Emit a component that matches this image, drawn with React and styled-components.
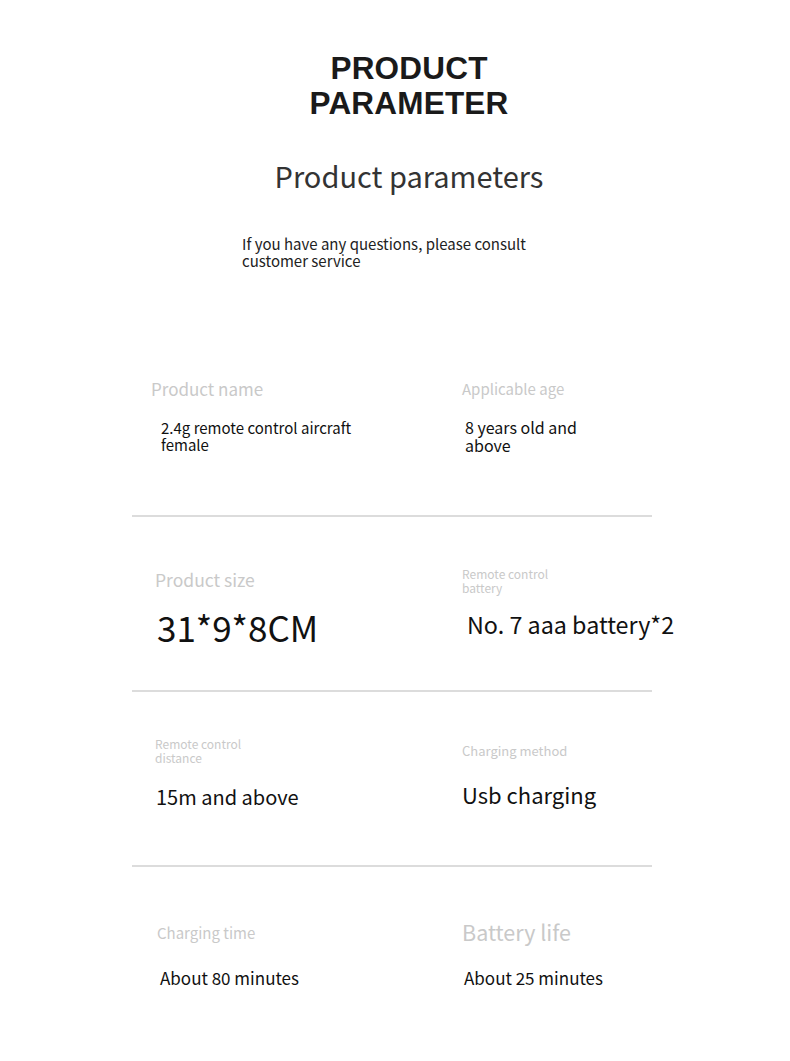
import React from "react";
import styled, { createGlobalStyle } from "styled-components";

const Global = createGlobalStyle`
  html, body { margin: 0; padding: 0; background: #ffffff; }
  body { font-family: "Noto Sans CJK SC", "Noto Sans", sans-serif; }
`;

const Page = styled.div`
  width: 790px;
  min-height: 1061px;
  background: #fff;
  display: flex;
  flex-direction: column;
  align-items: center;
`;

const Title = styled.h1`
  margin: 51px 0 0;
  font-family: "Liberation Sans", Arial, sans-serif;
  font-weight: 700;
  font-size: 31.5px;
  line-height: 35px;
  color: #1a1a1a;
  text-align: center;
  letter-spacing: 0.2px;
  transform: translateX(14px);
`;

const Subtitle = styled.h2`
  margin: 36px 0 0;
  font-weight: 400;
  font-size: 29px;
  line-height: 36px;
  color: #333;
  text-align: center;
  transform: translateX(14px);
`;

const Note = styled.p`
  align-self: flex-start;
  margin: 42px 0 0 242px;
  width: 310px;
  font-size: 15px;
  line-height: 17px;
  color: #222;
`;

const Table = styled.div`
  align-self: flex-start;
  margin: 73px 0 0 132px;
  width: 520px;
  display: flex;
  flex-direction: column;
`;

const Row = styled.div`
  display: grid;
  grid-template-columns: 310px 210px;
  height: ${(p) => p.$h || 175}px;
  box-sizing: border-box;
  border-bottom: ${(p) => (p.$last ? "none" : "2px solid #dcdcdc")};
`;

const Cell = styled.div`
  display: flex;
  flex-direction: column;
  padding-left: ${(p) => p.$pl}px;
`;

const Label = styled.div`
  margin-top: ${(p) => p.$mt}px;
  font-size: ${(p) => p.$size}px;
  line-height: ${(p) => p.$lh}px;
  color: #c9c9c9;
  max-width: ${(p) => p.$w || 400}px;
  white-space: ${(p) => (p.$w ? "normal" : "nowrap")};
`;

const ValueWrap = styled.div`
  padding-left: ${(p) => p.$pl}px;
`;

const Value = styled.div`
  margin-top: ${(p) => p.$mt}px;
  font-size: ${(p) => p.$size}px;
  line-height: ${(p) => p.$lh}px;
  color: #111;
  max-width: ${(p) => p.$w || 400}px;
  white-space: ${(p) => (p.$w ? "normal" : "nowrap")};
`;

const rows = [
  {
    cells: [
      { pl: 19, label: "Product name", ls: 17, llh: 20, lmt: 37, value: "2.4g remote control aircraft female", vs: 15, vlh: 17, vmt: 20, vpl: 10, vw: 210 },
      { pl: 20, label: "Applicable age", ls: 15, llh: 18, lmt: 38, value: "8 years old and above", vs: 16, vlh: 18, vmt: 20, vpl: 3, vw: 125 },
    ],
  },
  {
    cells: [
      { pl: 23, label: "Product size", ls: 17.5, llh: 20, lmt: 53, value: "31*9*8CM", vs: 35, vlh: 44, vmt: 15, vpl: 2 },
      { pl: 20, label: "Remote control battery", ls: 12, llh: 14, lw: 100, lmt: 50, value: "No. 7 aaa battery*2", vs: 23.3, vlh: 26, vmt: 16, vpl: 5 },
    ],
  },
  {
    cells: [
      { pl: 23, label: "Remote control distance", ls: 12, llh: 14, lw: 100, lmt: 45, value: "15m and above", vs: 20, vlh: 24, vmt: 20, vpl: 1 },
      { pl: 20, label: "Charging method", ls: 13, llh: 16, lmt: 51, value: "Usb charging", vs: 22, vlh: 26, vmt: 22, vpl: 0 },
    ],
  },
  {
    last: true,
    h: 190,
    cells: [
      { pl: 25, label: "Charging time", ls: 15, llh: 18, lmt: 57, value: "About 80 minutes", vs: 17, vlh: 20, vmt: 26, vpl: 3 },
      { pl: 20, label: "Battery life", ls: 21.5, llh: 25, lmt: 52, value: "About 25 minutes", vs: 17, vlh: 20, vmt: 24, vpl: 2 },
    ],
  },
];

export default function App() {
  return (
    <Page>
      <Global />
      <Title>
        PRODUCT
        <br />
        PARAMETER
      </Title>
      <Subtitle>Product parameters</Subtitle>
      <Note>If you have any questions, please consult customer service</Note>
      <Table>
        {rows.map((r, i) => (
          <Row key={i} $last={r.last} $h={r.h}>
            {r.cells.map((c, j) => (
              <Cell key={j} $pl={c.pl}>
                <Label $mt={c.lmt} $size={c.ls} $lh={c.llh} $w={c.lw}>
                  {c.label}
                </Label>
                <ValueWrap $pl={c.vpl}>
                  <Value $mt={c.vmt} $size={c.vs} $lh={c.vlh} $w={c.vw}>
                    {c.value}
                  </Value>
                </ValueWrap>
              </Cell>
            ))}
          </Row>
        ))}
      </Table>
    </Page>
  );
}
